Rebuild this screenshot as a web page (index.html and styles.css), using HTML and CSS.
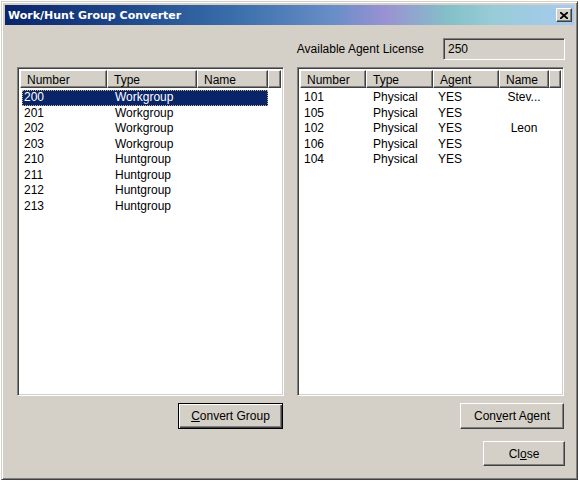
FILE: index.html
```html
<!DOCTYPE html>
<html lang="en">
<head>
    <meta charset="UTF-8">
    <title>Work/Hunt Group Converter</title>
    <link rel="stylesheet" href="styles.css">
</head>
<body>
    <div class="window">
        <div class="titlebar">
            <span class="title">Work/Hunt Group Converter</span>
            <button class="title-close" aria-label="Close">
                <svg width="8" height="7" viewBox="0 0 8 7"><path d="M0 0L8 7M8 0L0 7" stroke="#000" stroke-width="1.8"/></svg>
            </button>
        </div>

        <div class="dialog">
            <div class="license-row">
                <span>Available Agent License</span>
                <div class="field">250</div>
            </div>

            <div class="panes">
                <div class="pane">
                    <div class="listview">
                        <div class="lv-header">
                            <div class="hcell" style="width:87px">Number</div>
                            <div class="hcell" style="width:90px">Type</div>
                            <div class="hcell" style="width:71px">Name</div>
                            <div class="hcell filler"></div>
                        </div>
                        <div class="lv-body groups">
                            <div class="row selected"><span>200</span><span>Workgroup</span><span></span></div>
                            <div class="row"><span>201</span><span>Workgroup</span><span></span></div>
                            <div class="row"><span>202</span><span>Workgroup</span><span></span></div>
                            <div class="row"><span>203</span><span>Workgroup</span><span></span></div>
                            <div class="row"><span>210</span><span>Huntgroup</span><span></span></div>
                            <div class="row"><span>211</span><span>Huntgroup</span><span></span></div>
                            <div class="row"><span>212</span><span>Huntgroup</span><span></span></div>
                            <div class="row"><span>213</span><span>Huntgroup</span><span></span></div>
                        </div>
                    </div>
                    <div class="btn-row">
                        <button class="btn default convert-group"><u>C</u>onvert Group</button>
                    </div>
                </div>

                <div class="pane">
                    <div class="listview">
                        <div class="lv-header">
                            <div class="hcell" style="width:66px">Number</div>
                            <div class="hcell" style="width:67px">Type</div>
                            <div class="hcell" style="width:66px">Agent</div>
                            <div class="hcell" style="width:50px">Name</div>
                            <div class="hcell filler"></div>
                        </div>
                        <div class="lv-body agents">
                            <div class="row"><span>101</span><span>Physical</span><span>YES</span><span class="center">Stev...</span></div>
                            <div class="row"><span>105</span><span>Physical</span><span>YES</span><span class="center"></span></div>
                            <div class="row"><span>102</span><span>Physical</span><span>YES</span><span class="center">Leon</span></div>
                            <div class="row"><span>106</span><span>Physical</span><span>YES</span><span class="center"></span></div>
                            <div class="row"><span>104</span><span>Physical</span><span>YES</span><span class="center"></span></div>
                        </div>
                    </div>
                    <div class="btn-row">
                        <button class="btn convert-agent">Con<u>v</u>ert Agent</button>
                    </div>
                </div>
            </div>

            <div class="close-row">
                <button class="btn close-btn">Cl<u>o</u>se</button>
            </div>
        </div>
    </div>
</body>
</html>
```

FILE: styles.css
```css
body {
    margin: 0;
    background-color: #ffffff;
    font-family: "Liberation Sans", Arial, sans-serif;
    font-size: 12px;
    color: #000;
}
.window {
    margin: 1px 0 0 1px;
    width: 577px;
    height: 479px;
    box-sizing: border-box;
    background-color: #d4d0c8;
    border: 1px solid;
    border-color: #d4d0c8 #404040 #404040 #d4d0c8;
    box-shadow: inset 1px 1px #ffffff, inset -1px -1px #808080;
    padding: 3px;
    display: flex;
    flex-direction: column;
}
.titlebar {
    height: 20px;
    display: flex;
    align-items: center;
    justify-content: space-between;
    padding: 0 2px 0 3px;
    background: linear-gradient(to right, #0a246a 0%, #1f4a8c 22%, #3d72ad 42%, #6a8ec8 58%, #9a92d2 67%, #84c0c8 78%, #98ccd8 86%, #a6caf0 100%);
}
.title {
    font-family: "DejaVu Sans", sans-serif;
    font-weight: bold;
    font-size: 11px;
    color: #ffffff;
}
.title-close {
    width: 16px;
    height: 14px;
    padding: 0;
    background-color: #d4d0c8;
    border: 1px solid;
    border-color: #ffffff #404040 #404040 #ffffff;
    box-shadow: inset -1px -1px #808080;
    display: flex;
    align-items: center;
    justify-content: center;
}
.dialog {
    flex: 1;
    padding: 13px 9px 0 12px;
    display: flex;
    flex-direction: column;
}
.license-row {
    display: flex;
    align-items: center;
    justify-content: flex-end;
    gap: 19px;
    height: 22px;
}
.field {
    width: 122px;
    height: 22px;
    box-sizing: border-box;
    border: 1px solid;
    border-color: #808080 #ffffff #ffffff #808080;
    box-shadow: inset 1px 1px #404040, inset -1px -1px #d4d0c8;
    padding: 3px 0 0 4px;
}
.panes {
    margin-top: 7px;
    display: flex;
    gap: 13px;
}
.pane {
    width: 267px;
    display: flex;
    flex-direction: column;
}
.listview {
    height: 329px;
    box-sizing: border-box;
    background-color: #ffffff;
    border: 1px solid;
    border-color: #808080 #ffffff #ffffff #808080;
    box-shadow: inset 1px 1px #404040, inset -1px -1px #d4d0c8;
    padding: 2px;
}
.lv-header {
    display: flex;
    height: 18px;
}
.hcell {
    box-sizing: border-box;
    height: 18px;
    padding: 2px 0 0 6px;
    background-color: #d4d0c8;
    border-top: 1px solid #ffffff;
    border-left: 1px solid #ffffff;
    border-right: 1px solid #404040;
    border-bottom: 1px solid #404040;
    box-shadow: inset -1px -1px #808080;
    white-space: nowrap;
}
.hcell.filler {
    flex: 1;
}
.lv-body {
    padding-top: 2px;
}
.row {
    display: flex;
    height: 15.5px;
    line-height: 15px;
    margin-left: 2px;
}
.row span {
    white-space: nowrap;
    box-sizing: border-box;
    padding-left: 6px;
}
.groups .row {
    width: 246px;
}
.groups .row span:nth-child(1) { width: 85px; padding-left: 2px; }
.groups .row span:nth-child(2) { width: 90px; padding-left: 8px; }
.groups .row span:nth-child(3) { width: 71px; }
.agents .row span:nth-child(1) { width: 64px; padding-left: 2px; }
.agents .row span:nth-child(2) { width: 67px; padding-left: 7px; }
.agents .row span:nth-child(3) { width: 66px; padding-left: 5px; }
.agents .row span:nth-child(4) { width: 50px; padding-left: 0; text-align: center; }
.row.selected {
    background-color: #0a246a;
    color: #ffffff;
    outline: 1px dotted #c8b87a;
    outline-offset: -1px;
}
.btn-row {
    margin-top: 7px;
    display: flex;
    justify-content: flex-end;
}
.btn {
    font-family: "Liberation Sans", Arial, sans-serif;
    font-size: 12px;
    color: #000;
    height: 26px;
    box-sizing: border-box;
    background-color: #d4d0c8;
    border: 1px solid;
    border-color: #ffffff #404040 #404040 #ffffff;
    box-shadow: inset -1px -1px #808080;
    padding: 0;
}
.btn.default {
    border: 1px solid #000;
    box-shadow: inset 1px 1px #ffffff, inset -1px -1px #404040, inset -2px -2px #808080;
}
.convert-group {
    width: 105px;
    margin-right: 1px;
}
.convert-agent {
    width: 104px;
}
.close-row {
    margin-top: 12px;
    display: flex;
    justify-content: flex-end;
}
.close-btn {
    width: 82px;
    height: 25px;
}
```
